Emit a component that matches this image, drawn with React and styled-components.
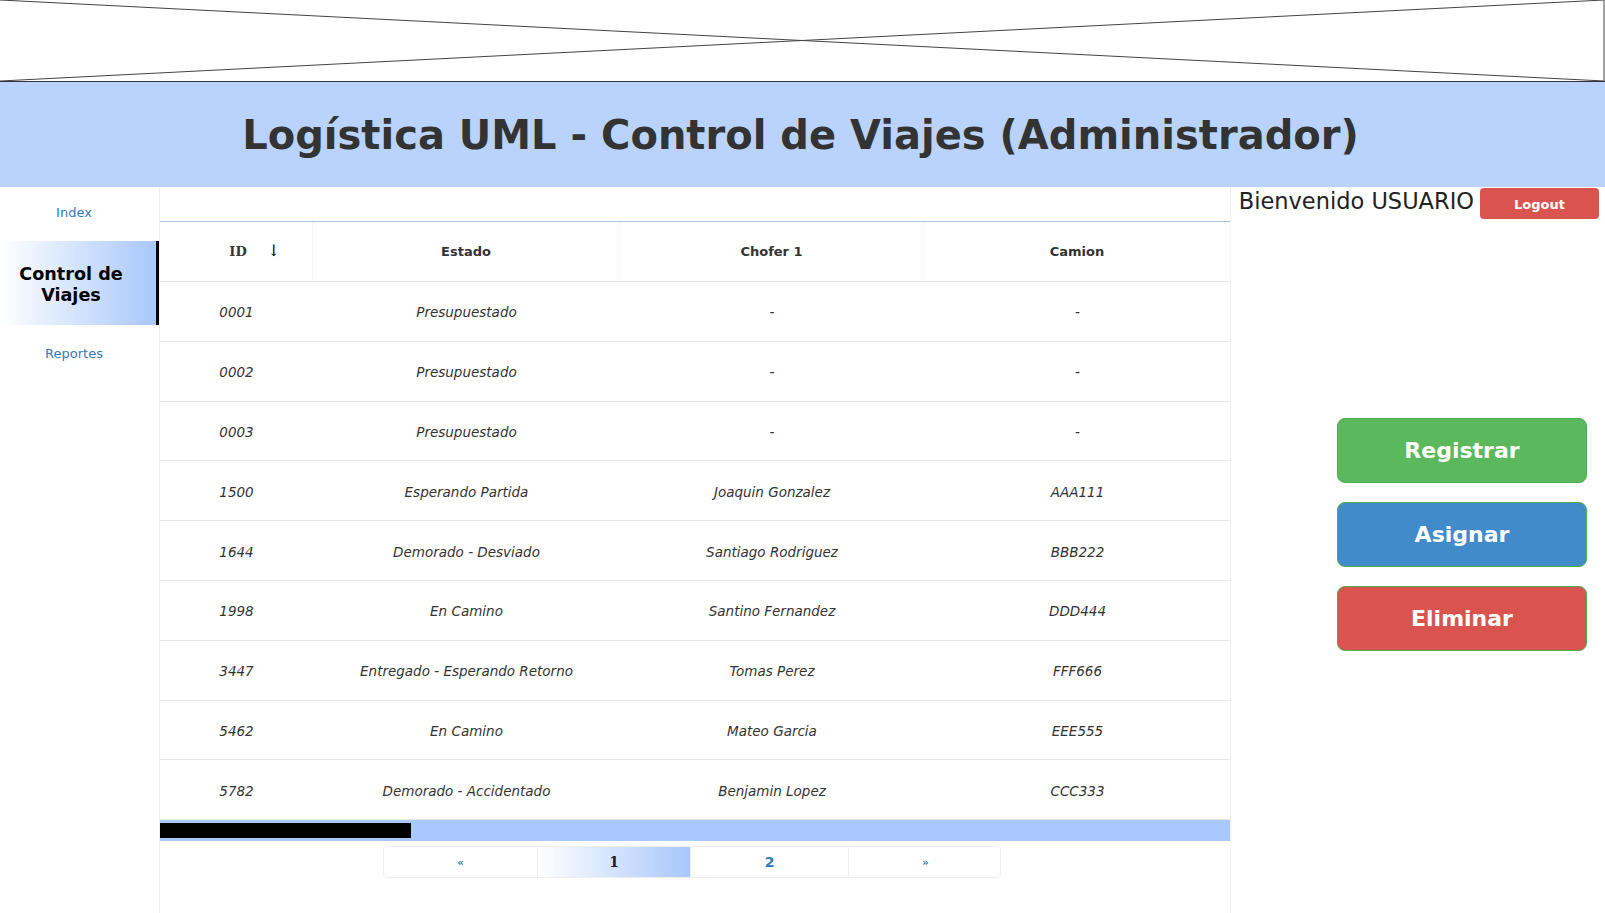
import React from 'react'
import styled, { createGlobalStyle } from 'styled-components'

const GlobalStyle = createGlobalStyle`
    html, body {
        margin: 0;
        padding: 0;
        background: #fff;
        font-family: "DejaVu Sans", Verdana, sans-serif;
        color: #333;
    }
`;

const Page = styled.div`
    width: 1605px;
    height: 913px;
    display: flex;
    flex-direction: column;
    overflow: hidden;
`;

const Banner = styled.div`
    height: 82px;
    border-bottom: 1px solid #333;
    box-sizing: border-box;

    svg {
        display: block;
        width: 100%;
        height: 100%;
    }
`;

const Header = styled.header`
    height: 105px;
    background: #b9d3fc;
    display: flex;
    align-items: center;
    justify-content: center;

    h1 {
        margin: 0 0 0 -4px;
        font-size: 40px;
        font-weight: bold;
        color: #333;
    }
`;

const Body = styled.div`
    flex: 1;
    display: grid;
    grid-template-columns: 160px 1071px 1fr;
`;

const Sidebar = styled.nav`
    border-right: 1px solid #eee;
    display: flex;
    flex-direction: column;
    padding-top: 10px;
`;

const NavLink = styled.a`
    display: flex;
    align-items: center;
    justify-content: center;
    text-align: center;
    color: #337ab7;
    font-size: 13px;
    text-decoration: none;
    padding-right: 11px;
    height: ${p => p.$active ? '84px' : '30px'};
    margin: ${p => p.$active ? '14px 0 13px' : '0'};
    box-sizing: border-box;

    ${p => p.$active && `
        padding: 4px 14px 0 0;
        background: linear-gradient(to right, #ffffff, #a8c7fb);
        border-right: 3px solid #000;
        color: #000;
        font-weight: bold;
        font-size: 17.6px;
        line-height: 21px;
    `}
`;

const Main = styled.main`
    border-right: 1px solid #f0f0f0;
    display: flex;
    flex-direction: column;
`;

const TopBar = styled.div`
    height: 34px;
    border-bottom: 1px solid #a9c4e0;
`;

const Table = styled.div`
    display: grid;
    grid-template-columns: 153px 307px 304px 307px;
`;

const HeadCell = styled.div`
    position: relative;
    height: 60px;
    display: flex;
    align-items: center;
    justify-content: center;
    font-weight: bold;
    font-size: 13px;
    color: #333;
    border-right: 1px solid #f6f6f6;
    border-bottom: 1px solid #e4e4e4;
    box-sizing: border-box;
    padding-left: ${p => p.$serif ? '4px' : '0'};
    font-family: ${p => p.$serif ? '"DejaVu Serif", serif' : '"DejaVu Sans", sans-serif'};

    &:last-child {
        border-right: none;
    }
`;

const SortArrow = styled.span`
    position: absolute;
    left: 107px;
    top: 19px;
    font-weight: normal;
    font-size: 16px;
    color: #000;
`;

const Cell = styled.div`
    height: 59.8px;
    display: flex;
    align-items: center;
    justify-content: center;
    padding-top: 2px;
    font-style: italic;
    font-size: 13.5px;
    color: #333;
    border-bottom: 1px solid #e8e8e8;
    box-sizing: border-box;
`;

const Scrollbar = styled.div`
    height: 21px;
    background: #a9c8fb;
    display: flex;
    align-items: center;
`;

const Thumb = styled.div`
    width: 251px;
    height: 15px;
    background: #000;
`;

const Pager = styled.ul`
    list-style: none;
    margin: 5px 0 0 223px;
    padding: 0;
    width: 618px;
    height: 32px;
    display: grid;
    grid-template-columns: 153px 153px 158px 154px;
    border: 1px solid #eee;
    border-radius: 4px;
    box-sizing: border-box;
    overflow: hidden;
`;

const PageItem = styled.li`
    display: flex;
    align-items: center;
    justify-content: center;
    border-left: ${p => p.$first ? 'none' : '1px solid #eee'};
    color: ${p => p.$active ? '#222' : '#337ab7'};
    font-weight: bold;
    font-size: ${p => p.$arrow ? '10px' : '14px'};
    font-family: ${p => p.$active ? '"DejaVu Serif", serif' : '"DejaVu Sans", sans-serif'};
    background: ${p => p.$active ? 'linear-gradient(to right, #ffffff, #a8c7fb)' : '#fff'};
`;

const Aside = styled.aside`
    display: flex;
    flex-direction: column;
    align-items: flex-end;
    padding-right: 6px;
`;

const Welcome = styled.div`
    display: flex;
    align-items: flex-start;
    gap: 6px;
    margin-top: 1px;

    span {
        font-size: 22.5px;
        line-height: 26px;
        color: #222;
    }
`;

const LogoutButton = styled.button`
    width: 119px;
    height: 31px;
    border: none;
    border-radius: 4px;
    background: #d9534f;
    color: #fff;
    font-family: "DejaVu Sans", sans-serif;
    font-weight: bold;
    font-size: 13px;
    padding-top: 2px;
`;

const Actions = styled.div`
    margin-top: 199px;
    margin-right: 12px;
    display: flex;
    flex-direction: column;
    gap: 19px;
`;

const ActionButton = styled.button`
    width: 250px;
    height: 65px;
    border: 1px solid #4cae4c;
    border-radius: 8px;
    background: ${p => p.$color};
    color: #fff;
    font-family: "DejaVu Sans", sans-serif;
    font-weight: bold;
    font-size: 22px;
`;

const rows = [
    ['0001', 'Presupuestado', '-', '-'],
    ['0002', 'Presupuestado', '-', '-'],
    ['0003', 'Presupuestado', '-', '-'],
    ['1500', 'Esperando Partida', 'Joaquin Gonzalez', 'AAA111'],
    ['1644', 'Demorado - Desviado', 'Santiago Rodriguez', 'BBB222'],
    ['1998', 'En Camino', 'Santino Fernandez', 'DDD444'],
    ['3447', 'Entregado - Esperando Retorno', 'Tomas Perez', 'FFF666'],
    ['5462', 'En Camino', 'Mateo Garcia', 'EEE555'],
    ['5782', 'Demorado - Accidentado', 'Benjamin Lopez', 'CCC333'],
];

const App = () => {
    return (
        <Page>
            <GlobalStyle />
            <Banner>
                <svg viewBox="0 0 1605 81" preserveAspectRatio="none">
                    <line x1="0" y1="0" x2="1604" y2="81" stroke="#444" strokeWidth="1" />
                    <line x1="0" y1="81" x2="1604" y2="0" stroke="#444" strokeWidth="1" />
                    <line x1="1604" y1="0" x2="1604" y2="81" stroke="#444" strokeWidth="1" />
                </svg>
            </Banner>
            <Header>
                <h1>Logística UML - Control de Viajes (Administrador)</h1>
            </Header>
            <Body>
                <Sidebar>
                    <NavLink href="#">Index</NavLink>
                    <NavLink href="#" $active>Control de<br />Viajes</NavLink>
                    <NavLink href="#">Reportes</NavLink>
                </Sidebar>
                <Main>
                    <TopBar />
                    <Table>
                        <HeadCell $serif>ID<SortArrow>↓</SortArrow></HeadCell>
                        <HeadCell>Estado</HeadCell>
                        <HeadCell>Chofer 1</HeadCell>
                        <HeadCell>Camion</HeadCell>
                        {rows.map(r => r.map((v, i) => (
                            <Cell key={r[0] + i}>{v}</Cell>
                        )))}
                    </Table>
                    <Scrollbar><Thumb /></Scrollbar>
                    <Pager>
                        <PageItem $first $arrow>«</PageItem>
                        <PageItem $active>1</PageItem>
                        <PageItem>2</PageItem>
                        <PageItem $arrow>»</PageItem>
                    </Pager>
                </Main>
                <Aside>
                    <Welcome>
                        <span>Bienvenido USUARIO</span>
                        <LogoutButton>Logout</LogoutButton>
                    </Welcome>
                    <Actions>
                        <ActionButton $color="#5cb85c">Registrar</ActionButton>
                        <ActionButton $color="#428bca">Asignar</ActionButton>
                        <ActionButton $color="#d9534f">Eliminar</ActionButton>
                    </Actions>
                </Aside>
            </Body>
        </Page>
    )
}

export default App
